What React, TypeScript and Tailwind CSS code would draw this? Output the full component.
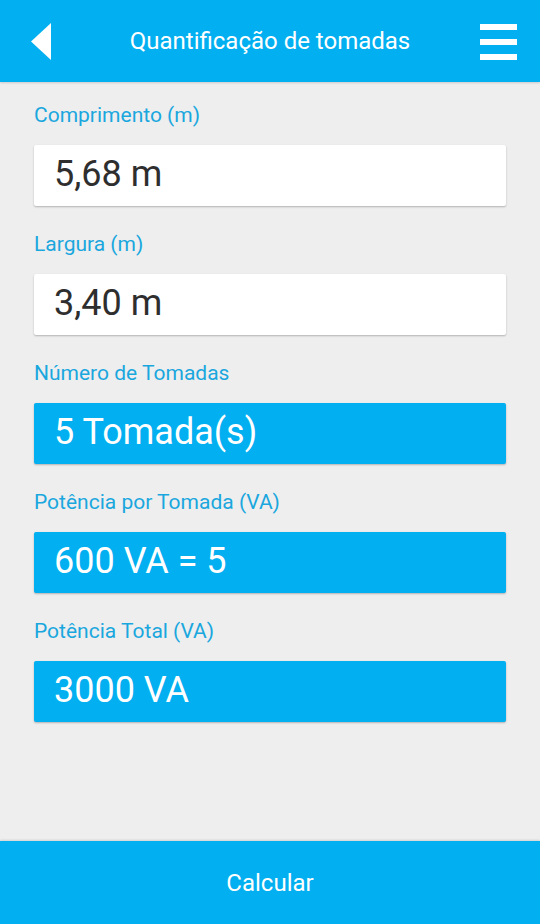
const fields = [
  { label: "Comprimento (m)", value: "5,68 m", filled: false },
  { label: "Largura (m)", value: "3,40 m", filled: false },
  { label: "Número de Tomadas", value: "5 Tomada(s)", filled: true },
  { label: "Potência por Tomada (VA)", value: "600 VA = 5", filled: true },
  { label: "Potência Total (VA)", value: "3000 VA", filled: true },
];

export default function App() {
  return (
    <div className="flex h-[924px] w-[540px] flex-col bg-[#eeeeee] font-['Roboto',sans-serif]">
      <header className="relative flex h-[82px] shrink-0 items-center justify-center bg-[#02aff0] shadow-[0_1px_2px_rgba(0,0,0,0.15)]">
        <svg className="absolute left-[31px] top-[23px]" width="20" height="37" viewBox="0 0 20 37">
          <polygon points="20,0 20,37 0,18.5" fill="#fff" />
        </svg>
        <h1 className="text-[24px] text-white">Quantificação de tomadas</h1>
        <div className="absolute right-[23px] top-[24px] flex h-[36px] w-[37px] flex-col justify-between">
          <span className="h-[6px] bg-white" />
          <span className="h-[6px] bg-white" />
          <span className="h-[6px] bg-white" />
        </div>
      </header>

      <main className="flex flex-1 flex-col px-[34px] pt-[19px]">
        {fields.map((f, i) => (
          <div key={i} className={i > 0 ? "mt-[24px]" : ""}>
            <div className="h-[28px] text-[21px] leading-[28px] text-[#1aa7de]">{f.label}</div>
            <div
              className={`mt-[16px] flex h-[61px] items-center rounded-[2px] pb-[3px] pl-[20px] text-[36px] shadow-[0_1px_2px_rgba(0,0,0,0.25)] ${
                f.filled ? "bg-[#02aff0] text-white" : "bg-white text-[#2e2e2e]"
              }`}
            >
              {f.value}
            </div>
          </div>
        ))}
      </main>

      <footer className="flex h-[83px] shrink-0 items-center justify-center bg-[#02aff0] text-[24px] text-white shadow-[0_-1px_2px_rgba(0,0,0,0.12)]">
        Calcular
      </footer>
    </div>
  );
}
